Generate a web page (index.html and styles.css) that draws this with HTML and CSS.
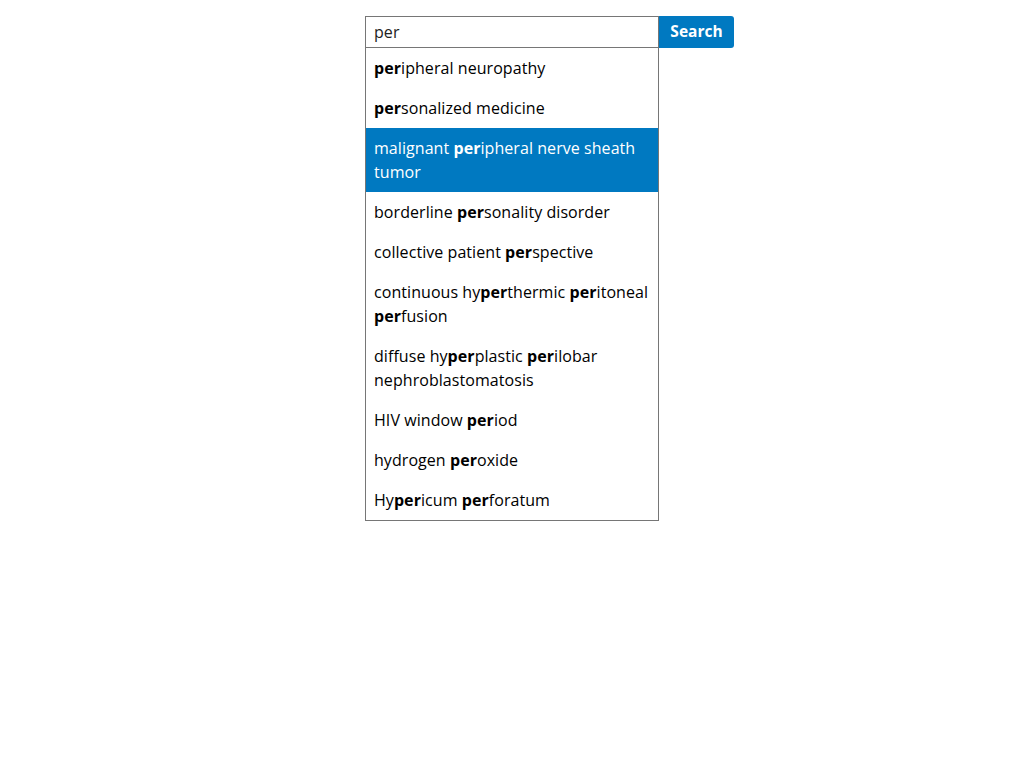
FILE: index.html
```html
<!DOCTYPE html>
<html>
<head>
<meta charset="utf-8">
<link rel="stylesheet" href="styles.css">
</head>
<body>
<div class="search">
  <div class="field">
    <div class="input">per</div>
    <ul class="menu">
      <li class="item"><b>per</b>ipheral neuropathy</li>
      <li class="item"><b>per</b>sonalized medicine</li>
      <li class="item active">malignant <b>per</b>ipheral nerve sheath tumor</li>
      <li class="item">borderline <b>per</b>sonality disorder</li>
      <li class="item">collective patient <b>per</b>spective</li>
      <li class="item">continuous hy<b>per</b>thermic <b>per</b>itoneal <b>per</b>fusion</li>
      <li class="item">diffuse hy<b>per</b>plastic <b>per</b>ilobar nephroblastomatosis</li>
      <li class="item">HIV window <b>per</b>iod</li>
      <li class="item">hydrogen <b>per</b>oxide</li>
      <li class="item">Hy<b>per</b>icum <b>per</b>foratum</li>
    </ul>
  </div>
  <button class="btn">Search</button>
</div>
</body>
</html>
```

FILE: styles.css
```css
html, body {
  margin: 0;
  padding: 0;
  background: #fff;
}
body {
  font-family: "Open Sans", "Liberation Sans", sans-serif;
  font-size: 16px;
  line-height: 24px;
  letter-spacing: 0.06px;
  color: #000;
}
.search {
  display: flex;
  align-items: flex-start;
  padding: 16px 0 0 365px;
}
.field {
  width: 294px;
}
.input {
  box-sizing: border-box;
  height: 32px;
  border: 1px solid #767676;
  padding: 3px 8px;
  color: #222;
}
.menu {
  list-style: none;
  margin: 0;
  padding: 0;
  border: 1px solid #767676;
  border-top: none;
}
.item {
  padding: 8px;
}
.item b {
  font-weight: 700;
}
.item.active {
  background: #0079c1;
  color: #fff;
}
.btn {
  box-sizing: border-box;
  height: 32px;
  width: 75px;
  border: none;
  border-radius: 0 3px 3px 0;
  background: #0079c1;
  color: #fff;
  font-family: "Open Sans", "Liberation Sans", sans-serif;
  font-weight: 700;
  font-size: 15.5px;
  line-height: 24px;
  padding: 0 0 2px;
  cursor: pointer;
}
```
